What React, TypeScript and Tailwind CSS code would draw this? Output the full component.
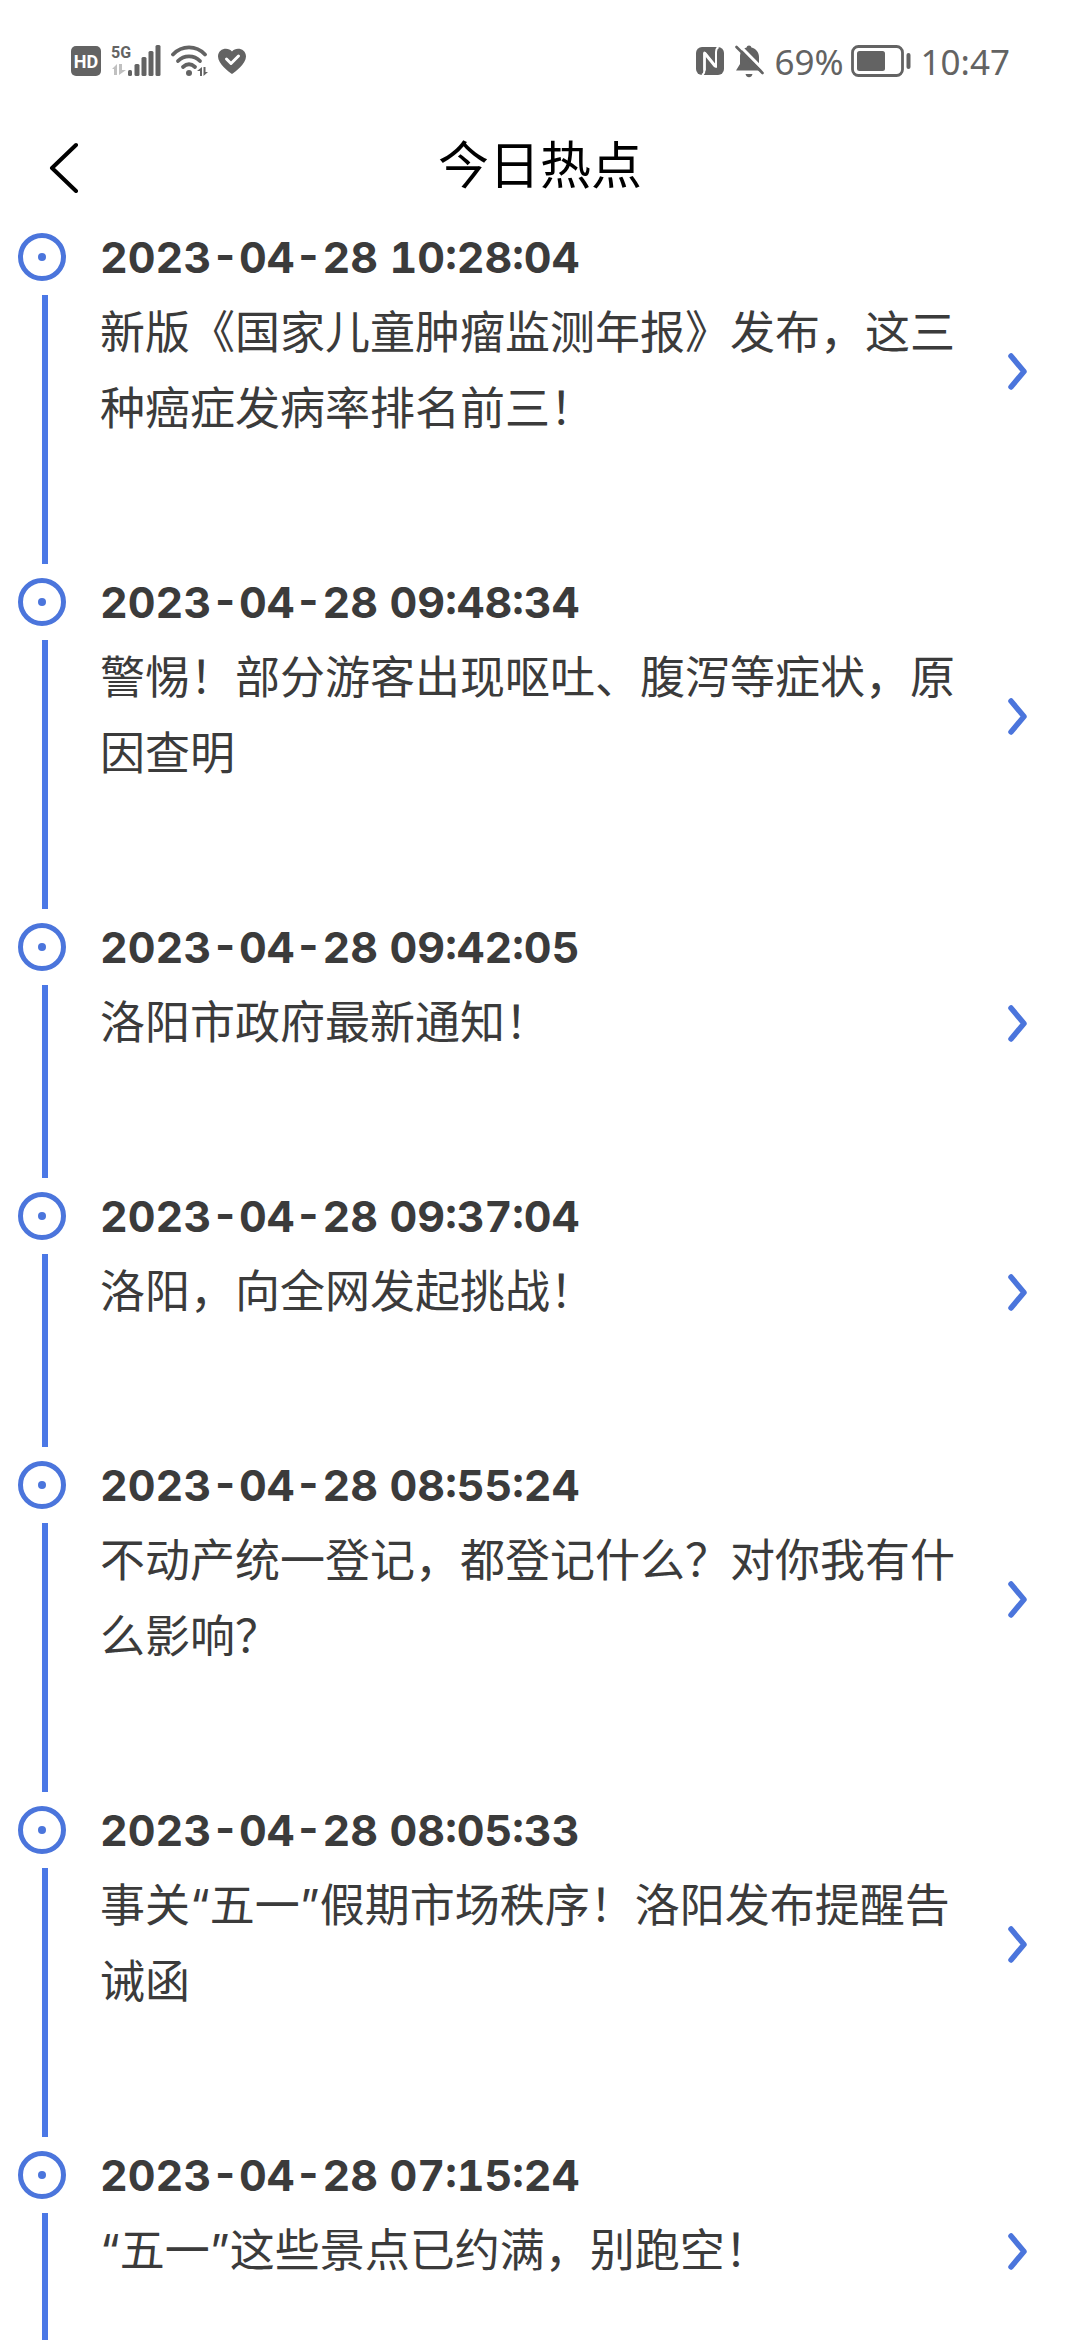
interface HotItem {
  id: number;
  time: string;
  title: string;
}

const items: HotItem[] = [
  { id: 1, time: '2023-04-28 10:28:04', title: '新版《国家儿童肿瘤监测年报》发布，这三种癌症发病率排名前三！' },
  { id: 2, time: '2023-04-28 09:48:34', title: '警惕！部分游客出现呕吐、腹泻等症状，原因查明' },
  { id: 3, time: '2023-04-28 09:42:05', title: '洛阳市政府最新通知！' },
  { id: 4, time: '2023-04-28 09:37:04', title: '洛阳，向全网发起挑战！' },
  { id: 5, time: '2023-04-28 08:55:24', title: '不动产统一登记，都登记什么？对你我有什么影响？' },
  { id: 6, time: '2023-04-28 08:05:33', title: '事关“五一”假期市场秩序！洛阳发布提醒告诫函' },
  { id: 7, time: '2023-04-28 07:15:24', title: '“五一”这些景点已约满，别跑空！' },
];

function SignalIcon() {
  return (
    <svg width="50" height="34" viewBox="0 0 50 34" fill="currentColor">
      <text x="0" y="14" fontSize="16" fontWeight="700" fontFamily="Roboto, sans-serif">5G</text>
      <g opacity="0.4">
        <path d="M1 25l5-5v11h-3v-6z" />
        <path d="M8 20h3v6h4l-7 5z" />
      </g>
      <rect x="17" y="26" width="4" height="6" rx="1.5" />
      <rect x="23.500" y="20" width="5" height="12" rx="1.5" />
      <rect x="30.500" y="13" width="5" height="19" rx="1.5" />
      <rect x="37.500" y="7" width="5" height="25" rx="1.5" />
      <rect x="44.500" y="1" width="5" height="31" rx="1.5" />
    </svg>
  );
}

function WifiIcon() {
  return (
    <svg width="37" height="34" viewBox="0 0 37 34" fill="none" stroke="currentColor" strokeWidth="3.8" strokeLinecap="round">
      <path d="M2 10.500c9-9.400 23-9.400 32 0" />
      <path d="M7 17c6-6.300 16-6.300 22 0" />
      <path d="M12 23c4-3.600 8-3.600 12 0" />
      <circle cx="18" cy="29" r="3" fill="currentColor" stroke="none" />
      <path d="M26 27l5-4v9h-2v-5zM32.500 23h2v5h2.500l-4.500 4z" fill="currentColor" stroke="none" />
    </svg>
  );
}

function HeartIcon() {
  return (
    <svg width="30" height="28" viewBox="0 0 30 28" fill="none">
      <path d="M15 27C12 25 1 17 1 9.500 1 1.500 11-.5 15 4.500 19-.5 29 1.500 29 9.500 29 17 18 25 15 27z" fill="currentColor" />
      <path d="M9.500 12l4.500 4.500 7.500-7.500" stroke="white" strokeWidth="3" strokeLinecap="round" strokeLinejoin="round" />
    </svg>
  );
}

function NfcIcon() {
  return (
    <svg width="28" height="28" viewBox="0 0 28 28" fill="none">
      <rect width="28" height="28" rx="6" fill="currentColor" />
      <path d="M6 28c2-1 2.500-2.500 2.500-5V5.500L20 20V5c0-2.500.5-4 2.500-5" stroke="white" strokeWidth="2" strokeLinejoin="round" />
      <path d="M8.500 5.500v18" stroke="white" strokeWidth="2.600" />
      <path d="M8.500 6L19.500 19.500" stroke="white" strokeWidth="3" />
    </svg>
  );
}

function BellOffIcon() {
  return (
    <svg width="30" height="34" viewBox="0 0 30 34" fill="none">
      <path d="M14 1.500c1.300 0 2.200.8 2.400 2C21 4.500 24 8.500 24 13v7l4 6.500H1L5 20v-7C5 8 7.500 4.500 11.600 3.500c.2-1.200 1.100-2 2.400-2z" fill="currentColor" />
      <path d="M10.500 30h7c-.6 2.200-1.800 3.300-3.500 3.300s-2.900-1.100-3.500-3.300z" fill="currentColor" />
      <path d="M4 1L30 27.500" stroke="white" strokeWidth="3" />
      <path d="M1.500 3L27.500 29" stroke="currentColor" strokeWidth="2.600" strokeLinecap="round" />
    </svg>
  );
}

function BatteryIcon() {
  return (
    <svg width="60" height="32" viewBox="0 0 60 32" fill="none">
      <rect x="1.500" y="1.500" width="50" height="29" rx="6" stroke="currentColor" strokeWidth="2.800" />
      <rect x="6" y="6" width="28" height="20" rx="2.500" fill="currentColor" />
      <rect x="55.500" y="8" width="4" height="16" rx="2" fill="currentColor" />
    </svg>
  );
}

function StatusBar() {
  return (
    <div className="flex h-[112px] shrink-0 items-center justify-between pt-[10px] pr-[70px] pl-[71px] text-[#636363]">
      <div className="flex items-center">
        <div className="mr-[10px] flex size-[30px] items-center justify-center rounded-[5px] bg-[#636363] font-['Roboto',sans-serif] text-[18px] font-bold text-white">
          HD
        </div>
        <SignalIcon />
        <div className="ml-[10px] flex items-center gap-[9px]">
          <WifiIcon />
          <HeartIcon />
        </div>
      </div>
      <div className="flex items-center font-['Noto_Sans',sans-serif] text-[35px] leading-none">
        <NfcIcon />
        <div className="mr-[9px] ml-[11px]">
          <BellOffIcon />
        </div>
        <span>69%</span>
        <div className="mr-[10px] ml-[7px]">
          <BatteryIcon />
        </div>
        <span>10:47</span>
      </div>
    </div>
  );
}

function Header() {
  return (
    <header className="grid h-[107px] shrink-0 grid-cols-[1fr_auto_1fr] items-center px-[48px] text-black">
      <button type="button" aria-label="返回" className="w-fit">
        <svg width="32" height="54" viewBox="0 0 32 54" fill="none" stroke="currentColor" strokeWidth="4" strokeLinecap="round" strokeLinejoin="round">
          <path d="M28 6L4 29l24 23" />
        </svg>
      </button>
      <h1 className="text-[51px] leading-[76px]">今日热点</h1>
    </header>
  );
}

function TimelineItem({ item }: { item: HotItem }) {
  return (
    <li className="grid grid-cols-[100px_1fr] text-[45px] leading-[76px]">
      <div className="flex items-center pl-[18px]">
        <span className="flex size-[48px] items-center justify-center rounded-full border-5 border-[#4b75dc]">
          <span className="size-[8px] rounded-full bg-[#4b75dc]" />
        </span>
      </div>
      <time className="text-[43px] font-bold tabular-nums">{item.time}</time>
      <div className="ml-[42px] w-[6px] bg-[#4b78e6]" />
      <div className="pb-[117px]">
        <a href="#" className="flex items-center justify-between pr-[50px]">
          <span className="mr-[44px] flex-1">{item.title}</span>
          <svg width="22" height="40" viewBox="0 0 22 40" fill="none" stroke="#4b75dc" strokeWidth="5.500" strokeLinecap="round" strokeLinejoin="round">
            <path d="M3 5l13 15.500L3 36" />
          </svg>
        </a>
      </div>
    </li>
  );
}

export default function App() {
  return (
    <div className="flex h-screen flex-col bg-white font-['Inter','Noto_Sans_CJK_SC',sans-serif]" lang="zh-CN">
      <StatusBar />
      <Header />
      <ul className="min-h-0 flex-1 overflow-y-auto text-[#3b3b3b] [scrollbar-width:none]">
        {items.map((item) => (
          <TimelineItem key={item.id} item={item} />
        ))}
      </ul>
    </div>
  );
}
